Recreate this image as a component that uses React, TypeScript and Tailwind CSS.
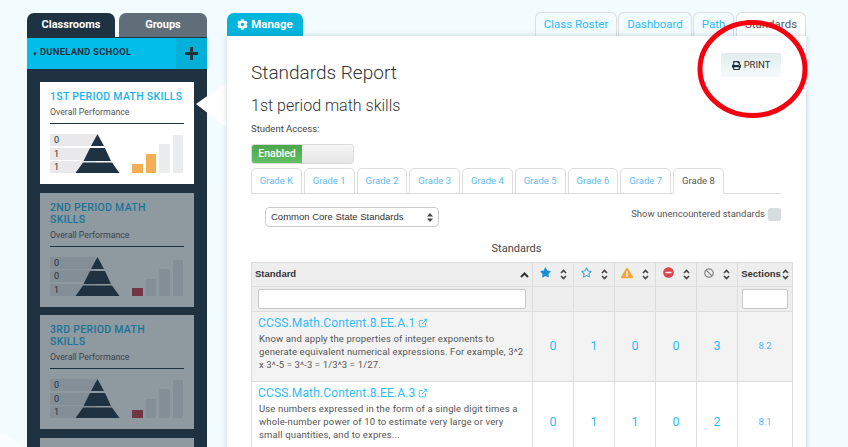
import React from 'react';
import { FaBan, FaCog, FaExclamationTriangle, FaMinusCircle, FaPrint, FaRegStar, FaStar } from 'react-icons/fa';
import { FiExternalLink } from 'react-icons/fi';

type Period = {
    title: string;
    scores: string[];
    active?: boolean;
    bars: string[];
};

const periods: Period[] = [
    { title: '1ST PERIOD MATH SKILLS', scores: ['0', '1', '1'], active: true, bars: ['h-[9px] bg-[#f4ae55]', 'h-[19px] bg-[#f4ae55]', 'h-[29px] bg-[#ebecee]', 'h-[38px] bg-[#ebecee]'] },
    { title: '2ND PERIOD MATH SKILLS', scores: ['0', '0', '1'], bars: ['h-[8px] bg-[#c23a48]', 'h-[17px] bg-[#ebecee]', 'h-[27px] bg-[#ebecee]', 'h-[36px] bg-[#ebecee]'] },
    { title: '3RD PERIOD MATH SKILLS', scores: ['0', '0', '1'], bars: ['h-[8px] bg-[#c23a48]', 'h-[19px] bg-[#ebecee]', 'h-[29px] bg-[#ebecee]', 'h-[38px] bg-[#ebecee]'] },
];

const grades = ['Grade K', 'Grade 1', 'Grade 2', 'Grade 3', 'Grade 4', 'Grade 5', 'Grade 6', 'Grade 7', 'Grade 8'];

const rows = [
    {
        code: 'CCSS.Math.Content.8.EE.A.1',
        text: 'Know and apply the properties of integer exponents to generate equivalent numerical expressions. For example, 3^2 x 3^-5 = 3^-3 = 1/3^3 = 1/27.',
        counts: ['0', '1', '0', '0', '3'],
        section: '8.2',
        rowClass: 'h-[70px] bg-[#f3f3f3]',
    },
    {
        code: 'CCSS.Math.Content.8.EE.A.3',
        text: 'Use numbers expressed in the form of a single digit times a whole-number power of 10 to estimate very large or very small quantities, and to expres...',
        counts: ['0', '1', '1', '0', '2'],
        section: '8.1',
        rowClass: 'h-[81px] bg-white',
    },
];

const SortIcon = () => (
    <svg width="7" height="11" viewBox="0 0 7 11" fill="none" stroke="#444" strokeWidth="1.6">
        <path d="M1 4 L3.5 1.5 L6 4" />
        <path d="M1 7 L3.5 9.5 L6 7" />
    </svg>
);

const PeriodCard = ({ title, scores, active, bars }: Period) => {
    return (
        <div className={`relative shrink-0 bg-white px-[10px] pt-[9px] pb-[11px] ${active ? '' : 'opacity-50'}`}>
            <h3 className={`text-[10.5px] leading-[12px] font-medium tracking-[0.3px] text-[#14b4ee] ${active ? '' : 'max-w-[120px]'}`}>{title}</h3>
            <p className="mt-[3px] text-[8.75px] leading-[12px] text-[#555]">Overall Performance</p>
            <div className="mt-[5px] h-px bg-[#1f3241]" />
            <div className="mt-[10px] flex items-end justify-between pr-px">
                <div className="relative flex w-[71px] flex-col gap-[1.5px]">
                    {scores.map((s, i) => (
                        <div key={i} className="h-[12px] w-[46px] bg-[#e9e9eb] pl-[4px] text-[9px] leading-[12px] text-[#1f3241]">{s}</div>
                    ))}
                    <svg className="absolute left-[25px] top-0" width="46" height="40" viewBox="0 0 46 40" fill="#1f3241">
                        <path d="M22.5 0 L29 12 L16 12 Z" />
                        <path d="M15 14 L30 14 L36 27 L8.5 27 Z" />
                        <path d="M8 28.5 L37 28.5 L44.5 39 L0.5 39 Z" />
                    </svg>
                </div>
                <div className="flex items-end gap-[3px]">
                    {bars.map((b, i) => (
                        <div key={i} className={`w-[10.5px] ${b}`} />
                    ))}
                </div>
            </div>
        </div>
    );
};

export default function App() {
    return (
        <div className="relative flex h-[447px] w-[848px] gap-[20px] overflow-hidden bg-[#f2fbfe] pl-[27px] pt-[12px] font-['Roboto',sans-serif]">
            {/* faint background blob */}
            <div className="absolute -left-[30px] top-[434px] h-[60px] w-[55px] rounded-full bg-[#f8fdff]" />

            {/* sidebar */}
            <aside className="relative flex w-[180px] shrink-0 flex-col">
                <div className="flex h-[25px] shrink-0 justify-between pt-px">
                    <div className="flex w-[88px] items-center justify-center rounded-t-[7px] bg-[#1f3241] text-[11px] font-bold text-white">Classrooms</div>
                    <div className="flex w-[88px] items-center justify-center rounded-t-[7px] bg-[#5f6e79] text-[11px] font-bold text-white">Groups</div>
                </div>
                <div className="flex h-[32px] shrink-0 items-center border-t border-[#1f3241] bg-[#02bdea] pl-[5px]">
                    <span className="text-[6px] text-[#1f3241]">▼</span>
                    <span className="-mt-[2px] ml-[2px] flex-1 text-[9.5px] font-bold tracking-[0.2px] text-[#1f3241]">DUNELAND SCHOOL</span>
                    <div className="flex h-full w-[31px] items-center justify-center bg-[#00b0d9] text-[#1f3241]">
                        <svg width="13" height="13" viewBox="0 0 13 13" fill="currentColor">
                            <rect x="5" y="0" width="3" height="13" />
                            <rect x="0" y="5" width="13" height="3" />
                        </svg>
                    </div>
                </div>
                <div className="flex flex-1 flex-col gap-[8.5px] bg-[#1f3241] px-[13px] pt-[13px]">
                    {periods.map((p) => (
                        <PeriodCard key={p.title} {...p} />
                    ))}
                    <div className="h-[102px] shrink-0 bg-white opacity-50" />
                </div>
                <svg className="absolute left-[169px] top-[70px]" width="31" height="46" viewBox="0 0 31 46" fill="#fff">
                    <path d="M0 22 L31 0 L31 46 Z" />
                </svg>
            </aside>

            {/* main column */}
            <main className="relative flex w-[579px] shrink-0 flex-col">
                <div className="flex h-[24px] shrink-0 items-end justify-between">
                    <div className="flex h-[23px] w-[76px] items-center justify-center gap-[3px] rounded-t-[7px] bg-[#02b5dd] text-[11.5px] font-bold text-white">
                        <FaCog className="text-[11px]" />
                        Manage
                    </div>
                    <div className="flex h-[24px] gap-px text-[11.5px] text-[#2ebcff]">
                        <div className="flex w-[82px] items-center justify-center rounded-t-[6px] border border-b-0 border-[#dddddd]">Class Roster</div>
                        <div className="flex w-[74px] items-center justify-center rounded-t-[6px] border border-b-0 border-[#dddddd]">Dashboard</div>
                        <div className="flex w-[41px] items-center justify-center rounded-t-[6px] border border-b-0 border-[#dddddd]">Path</div>
                        <div className="ml-px flex w-[70px] items-center justify-center rounded-t-[6px] border border-b-0 border-[#dddddd] bg-white text-[#555]">Standards</div>
                    </div>
                </div>
                <section className="flex-1 bg-white pl-[24px] pr-[25px] shadow-[0_0_5px_rgba(80,110,120,0.3)]">
                    <div className="flex justify-between pt-[17px]">
                        <div>
                            <h1 className="mt-[8px] text-[19px] leading-[24px] font-light text-[#333]">Standards Report</h1>
                            <h2 className="mt-[9px] text-[16px] leading-[24px] font-light text-[#333]">1st period math skills</h2>
                            <p className="mt-[5px] text-[9.5px] leading-[12px] text-[#444]">Student Access:</p>
                            <div className="mt-[9px] flex h-[20px] w-[103px] overflow-hidden rounded-[3px] border border-[#dadada]">
                                <div className="flex w-[50px] items-center justify-center bg-gradient-to-b from-[#4ca64c] to-[#62bf62] text-[10.5px] font-medium text-white">Enabled</div>
                                <div className="flex-1 bg-gradient-to-b from-[#f6f6f6] to-[#e6e6e6]" />
                            </div>
                        </div>
                        <button className="flex h-[24px] w-[60px] items-center justify-center gap-[3px] rounded-[2px] bg-gradient-to-b from-[#e2ecee] to-[#f5fbfb] text-[9.5px] text-[#333]">
                            <FaPrint className="text-[9px] text-[#1f3241]" />
                            PRINT
                        </button>
                    </div>

                    <div className="mt-[4px] flex h-[26px] gap-[2px] border-b border-[#dddddd] text-[9.5px]">
                        {grades.map((g) => (
                            <div key={g} className={`flex h-[26px] w-[50.75px] items-center justify-center rounded-t-[5px] border border-[#dddddd] ${g === 'Grade 8' ? 'border-b-white bg-white text-[#555]' : 'text-[#62bcf5]'}`}>{g}</div>
                        ))}
                    </div>

                    <div className="mt-[13px] flex items-start justify-between pl-[14px]">
                        <div className="flex h-[20px] w-[174px] items-center justify-between rounded-[4px] border border-[#cccccc] px-[5px] font-['Liberation_Sans',sans-serif] text-[9.5px] text-[#333]">
                            Common Core State Standards
                            <svg width="6" height="9" viewBox="0 0 6 9" fill="#444">
                                <path d="M3 0 L6 3.5 L0 3.5 Z" />
                                <path d="M3 9 L6 5.5 L0 5.5 Z" />
                            </svg>
                        </div>
                        <div className="flex items-center gap-[3px]">
                            <span className="text-[9.5px] text-[#555]">Show unencountered standards</span>
                            <span className="h-[13px] w-[13px] rounded-[2px] bg-[#d7dcdf]" />
                        </div>
                    </div>

                    <p className="mt-[15px] w-[531px] text-center text-[11px] leading-[14px] text-[#444]">Standards</p>

                    <table className="mt-[6px] w-[541px] table-fixed border-collapse text-[#333]">
                        <colgroup>
                            <col className="w-[281px]" />
                            <col className="w-[41px]" />
                            <col className="w-[41px]" />
                            <col className="w-[41px]" />
                            <col className="w-[41px]" />
                            <col className="w-[41px]" />
                            <col className="w-[55px]" />
                        </colgroup>
                        <thead className="bg-[#eeeeee] font-['Liberation_Sans',sans-serif] text-[9.5px]">
                            <tr className="h-[24px]">
                                <th className="border border-[#dddddd] px-[3px] text-left">
                                    <div className="flex items-center justify-between">
                                        Standard
                                        <svg width="9" height="6" viewBox="0 0 9 6" fill="none" stroke="#333" strokeWidth="2"><path d="M1 5 L4.5 1.5 L8 5" /></svg>
                                    </div>
                                </th>
                                {[
                                    <FaStar className="text-[11px] text-[#1b8fd6]" />,
                                    <FaRegStar className="text-[11px] text-[#2a9be0]" />,
                                    <FaExclamationTriangle className="text-[12px] text-[#f5a533]" />,
                                    <FaMinusCircle className="text-[11px] text-[#d9464a]" />,
                                    <FaBan className="text-[10px] text-[#8a8a8a]" />,
                                ].map((icon, i) => (
                                    <th key={i} className="border border-[#dddddd]">
                                        <div className="flex items-center justify-center gap-[9px] pb-px">
                                            <span className="-mt-[3px]">{icon}</span>
                                            <SortIcon />
                                        </div>
                                    </th>
                                ))}
                                <th className="border border-[#dddddd]">
                                    <div className="flex items-center justify-center gap-px">
                                        Sections
                                        <SortIcon />
                                    </div>
                                </th>
                            </tr>
                            <tr className="h-[25px]">
                                <th className="border border-[#dddddd] px-[6px]">
                                    <div className="h-[20px] rounded-[2px] border border-[#c8c8c8] bg-white" />
                                </th>
                                <th className="border border-[#dddddd]" />
                                <th className="border border-[#dddddd]" />
                                <th className="border border-[#dddddd]" />
                                <th className="border border-[#dddddd]" />
                                <th className="border border-[#dddddd]" />
                                <th className="border border-[#dddddd] px-[4px]">
                                    <div className="h-[20px] rounded-[2px] border border-[#c8c8c8] bg-white" />
                                </th>
                            </tr>
                        </thead>
                        <tbody>
                            {rows.map((r) => (
                                <tr key={r.code} className={r.rowClass}>
                                    <td className="border border-[#dddddd] px-[6px] align-top">
                                        <div className="mt-[3px] flex items-center gap-[3px] text-[12px] leading-[16px] tracking-[0.15px] text-[#2ebcff]">
                                            {r.code}
                                            <FiExternalLink className="text-[10px]" />
                                        </div>
                                        <p className="mt-[1px] pl-px text-[9.5px] leading-[13px] tracking-[0.14px] text-[#555]">{r.text}</p>
                                    </td>
                                    {r.counts.map((c, i) => (
                                        <td key={i} className="border border-[#dddddd] text-center text-[12.5px] text-[#2ebcff]">{c}</td>
                                    ))}
                                    <td className="border border-[#dddddd] text-center text-[9.5px] text-[#4db8f5]">{r.section}</td>
                                </tr>
                            ))}
                        </tbody>
                    </table>
                </section>
            </main>

            {/* red marker drawn over the screenshot */}
            <svg className="absolute left-[695px] top-[16px]" width="116" height="106" viewBox="0 0 116 106" fill="none">
                <ellipse cx="57.5" cy="53" rx="52.5" ry="46.5" stroke="#f5000f" strokeWidth="5" />
            </svg>
        </div>
    );
}
